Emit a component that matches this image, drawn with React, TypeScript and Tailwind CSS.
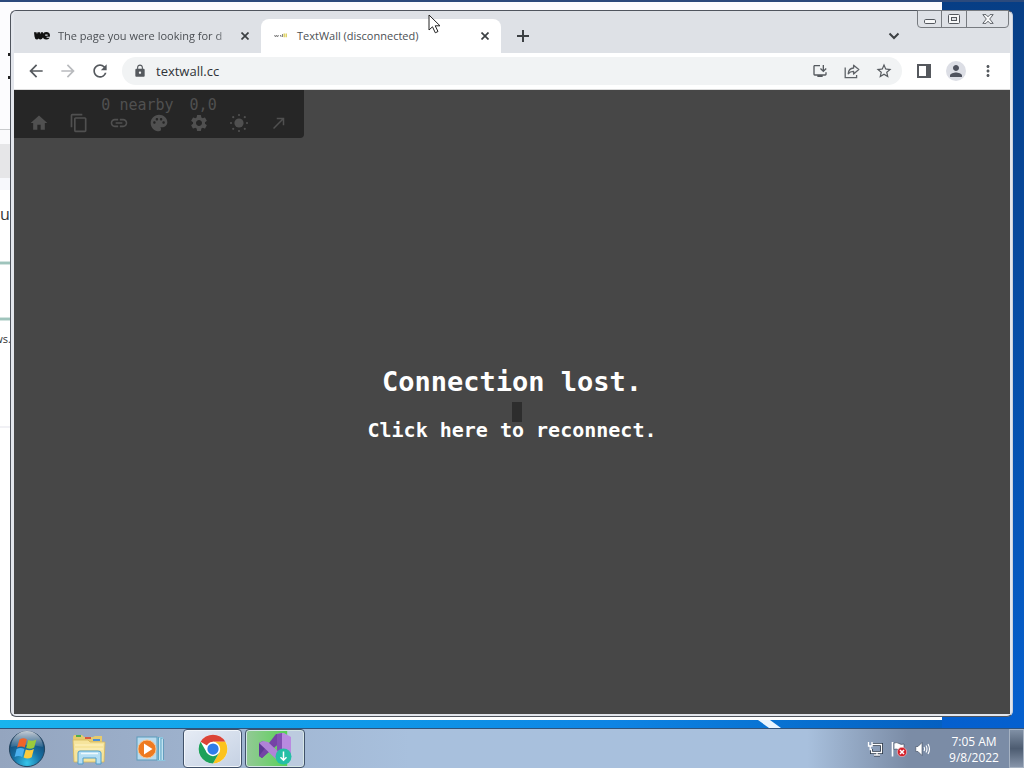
import React from 'react';
import {
  MdArrowBack,
  MdArrowForward,
  MdCallMade,
  MdContentCopy,
  MdHome,
  MdLink,
  MdLock,
  MdMoreVert,
  MdOutlineInstallDesktop,
  MdPalette,
  MdPerson,
  MdRefresh,
  MdSettings,
  MdStarBorder,
} from 'react-icons/md';

interface IconButtonProps {
  label: string;
  children: React.ReactNode;
  className?: string;
}

const IconButton: React.FC<IconButtonProps> = ({ label, children, className = '' }) => (
  <button
    type="button"
    aria-label={label}
    className={`flex shrink-0 items-center justify-center ${className}`}
  >
    {children}
  </button>
);

const CloseIcon = () => (
  <svg className="h-2 w-2" viewBox="0 0 8 8" stroke="#3c4043" strokeWidth="1.7">
    <path d="M0.5 0.5 7.5 7.5M7.5 0.5 0.5 7.5" />
  </svg>
);

const SunIcon = () => (
  <svg className="h-5 w-5" viewBox="0 0 20 20" fill="currentColor">
    <circle cx="10" cy="10" r="4.6" />
    <circle cx="10" cy="2" r="1.1" />
    <circle cx="10" cy="18" r="1.1" />
    <circle cx="2" cy="10" r="1.1" />
    <circle cx="18" cy="10" r="1.1" />
    <circle cx="4.2" cy="4.2" r="1.1" />
    <circle cx="15.8" cy="4.2" r="1.1" />
    <circle cx="4.2" cy="15.8" r="1.1" />
    <circle cx="15.8" cy="15.8" r="1.1" />
  </svg>
);

const ShareIcon = () => (
  <svg className="h-4 w-4" viewBox="0 0 16 16" fill="none" stroke="#5f6368" strokeWidth="1.3">
    <path d="M1.2 4.5V14.6H12.6V12" />
    <path d="M4.2 10.8C4.5 6.8 6.8 5.2 9.6 5V2.2L14.8 6.6 9.6 11V8.3C7.2 8.2 5.6 9 4.2 10.8Z" strokeLinejoin="round" />
  </svg>
);

const SidePanelIcon = () => (
  <svg className="h-3.5 w-3.5" viewBox="0 0 14 14">
    <rect x="1" y="1" width="12" height="12" fill="none" stroke="#55585d" strokeWidth="2" />
    <rect x="9" y="1" width="4" height="12" fill="#55585d" />
  </svg>
);

/* Page behind the browser, only its edges are visible */
const BackgroundWindow = () => (
  <div className="absolute top-0.5 right-[82px] bottom-2 left-0 overflow-hidden bg-white font-['Open_Sans',sans-serif] text-[#333]">
    <div className="flex h-32 flex-col gap-5 border-b border-[#c9cbcd] bg-[#fcfcfe] pt-[51px] pl-2">
      <span className="h-[3px] w-1 bg-[#222]" />
      <span className="h-[3px] w-1 bg-[#222]" />
    </div>
    <div className="h-3.5 bg-[#fafafc]" />
    <div className="h-[34px] bg-[#e6e6e8]" />
    <div className="h-3 bg-[#f7f8fc]" />
    <p className="h-[71px] pt-3 text-base leading-6">u</p>
    <div className="h-1 border-y border-[#d3e4e0] bg-[#9fc4bc]" />
    <div className="h-[52px]" />
    <div className="h-1 border-y border-[#d3e4e0] bg-[#9fc4bc]" />
    <p className="flex h-[105px] w-[11px] justify-end pt-2 text-[11px] leading-5">ws.</p>
    <div className="h-0.5 bg-[#f1f1f5]" />
  </div>
);

const WindowControls = () => (
  <div className="absolute -top-px right-[3px] flex h-[18px] rounded-b border border-[#777b80] text-[#54585e]">
    <IconButton label="Minimize" className="w-6 border-r border-[#777b80]">
      <svg className="mt-1 h-[5px] w-3" viewBox="0 0 12 5">
        <rect x="0.5" y="0.5" width="11" height="4" rx="1.2" fill="#f7f8f9" stroke="currentColor" />
      </svg>
    </IconButton>
    <IconButton label="Maximize" className="w-[25px] border-r border-[#777b80]">
      <svg className="h-2.5 w-3" viewBox="0 0 12 10">
        <rect x="0.5" y="0.5" width="11" height="9" rx="1" fill="#f7f8f9" stroke="currentColor" />
        <rect x="3.5" y="3.5" width="5" height="3" fill="#e0e2e6" stroke="currentColor" />
      </svg>
    </IconButton>
    <IconButton label="Close" className="w-[41px]">
      <svg className="h-2.5 w-3" viewBox="0 0 12 10">
        <path d="M0.8 0.6H4L6 2.8 8 0.6H11.2L7.7 5 11.2 9.4H8L6 7.2 4 9.4H0.8L4.3 5Z" fill="#f7f8f9" stroke="currentColor" strokeWidth="0.9" />
      </svg>
    </IconButton>
  </div>
);

const TabStrip = () => (
  <div className="flex h-[42px] items-end rounded-t bg-[#dee1e6] text-[11px] text-[#4b4f54]">
    <div className="flex h-[34px] w-[247px] items-center pr-2 pl-5">
      <svg className="h-2.5 w-4 shrink-0" viewBox="0 0 16 10">
        <path d="M0 1.2H2.6V2.4H3.4V1.2H6V2.4H6.8V1.2H9V6.4Q8 8.4 6.4 8.4 5.2 8.4 4.7 7.4 4 8.4 2.8 8.4 0.8 8.4 0.5 5.6Z" fill="#111" />
        <circle cx="12.3" cy="4.8" r="3.7" fill="#111" />
        <path d="M11.2 4.1H13.6M12.6 6.3H16" stroke="#dee1e6" strokeWidth="1.1" />
      </svg>
      <span className="ml-2 flex-1 overflow-hidden whitespace-nowrap [mask-image:linear-gradient(to_right,black_90%,transparent)]">
        The page you were looking for d
      </span>
      <IconButton label="Close tab" className="ml-1 h-4 w-4"><CloseIcon /></IconButton>
    </div>
    <div className="flex h-[34px] w-60 items-center rounded-t-lg bg-white px-2">
      <svg className="ml-1 h-4 w-4 shrink-0" viewBox="0 0 16 16">
        <path d="M1.5 7 2.5 9 3.5 7 4.5 9 5.5 7M7 7.5H8V9M9.5 6V9" fill="none" stroke="#777" strokeWidth="0.9" />
        <path d="M11.2 5.5V9.2M13.2 5.5V9.2" stroke="#d9cb4e" strokeWidth="1.3" />
      </svg>
      <span className="ml-2 flex-1 whitespace-nowrap">TextWall (disconnected)</span>
      <IconButton label="Close tab" className="h-4 w-4"><CloseIcon /></IconButton>
    </div>
    <IconButton label="New tab" className="ml-2 h-[34px] w-7">
      <svg className="h-3 w-3" viewBox="0 0 12 12" stroke="#3c4043" strokeWidth="2">
        <path d="M6 0V12M0 6H12" />
      </svg>
    </IconButton>
    <IconButton label="Search tabs" className="mr-[102px] ml-auto h-[34px] w-7">
      <svg className="h-2 w-3" viewBox="0 0 12 8" fill="none" stroke="#3c4043" strokeWidth="2">
        <path d="M1.5 1.5 6 6 10.5 1.5" />
      </svg>
    </IconButton>
  </div>
);

const AddressBar = () => (
  <div className="flex h-[37px] items-center border-b border-[#dcdcdc] bg-white pr-3 pl-3 text-[#55595e]">
    <IconButton label="Back" className="w-5"><MdArrowBack className="h-5 w-5" /></IconButton>
    <IconButton label="Forward" className="ml-3 w-5"><MdArrowForward className="h-5 w-5 text-[#b9bbbe]" /></IconButton>
    <IconButton label="Reload" className="ml-3 w-5"><MdRefresh className="h-5 w-5" /></IconButton>
    <div className="ml-3 flex h-7 flex-1 items-center rounded-full bg-[#f1f3f4] pr-2 pl-[11px]">
      <MdLock className="h-3.5 w-3.5 shrink-0" />
      <input
        aria-label="Address"
        defaultValue="textwall.cc"
        className="ml-[9px] min-w-0 flex-1 bg-transparent pt-0.5 text-[13px] text-[#303338] outline-none"
      />
      <IconButton label="Install app" className="w-5"><MdOutlineInstallDesktop className="h-4 w-4" /></IconButton>
      <IconButton label="Share" className="ml-3 w-5"><ShareIcon /></IconButton>
      <IconButton label="Bookmark" className="ml-3 w-5"><MdStarBorder className="h-[18px] w-[18px]" /></IconButton>
    </div>
    <IconButton label="Side panel" className="ml-3 w-5"><SidePanelIcon /></IconButton>
    <IconButton label="Profile" className="ml-3 h-5 w-5 rounded-full bg-[#dcdee5]">
      <MdPerson className="h-[18px] w-[18px] text-[#4f535e]" />
    </IconButton>
    <IconButton label="Menu" className="ml-3 w-5"><MdMoreVert className="h-[18px] w-[18px]" /></IconButton>
  </div>
);

const wallTools = [
  { label: 'Home', icon: <MdHome className="h-5 w-5" /> },
  { label: 'Copy', icon: <MdContentCopy className="h-5 w-5" /> },
  { label: 'Link', icon: <MdLink className="h-5 w-5" /> },
  { label: 'Colors', icon: <MdPalette className="h-5 w-5" /> },
  { label: 'Settings', icon: <MdSettings className="h-5 w-5" /> },
  { label: 'Theme', icon: <SunIcon /> },
  { label: 'Teleport', icon: <MdCallMade className="h-[18px] w-[18px]" /> },
];

const TextWall = () => (
  <main className="relative flex-1 bg-[#474747] font-['DejaVu_Sans_Mono',monospace]">
    <div className="h-12 w-[290px] rounded-br bg-[#262626] pt-[7px] text-[#505050]">
      <p className="flex justify-center gap-4 text-[15px] leading-4">
        <span>0 nearby</span>
        <span>0,0</span>
      </p>
      <div className="flex px-[5px]">
        {wallTools.map((tool) => (
          <IconButton key={tool.label} label={tool.label} className="h-5 w-10">
            {tool.icon}
          </IconButton>
        ))}
      </div>
    </div>
    {/* Text cursor of the wall, under the overlay */}
    <span className="absolute top-1/2 left-1/2 h-5 w-2.5 bg-[#2d2d2d]" />
    <div className="absolute inset-0 flex flex-col items-center justify-center gap-4 pt-2 font-bold whitespace-nowrap text-white">
      <h1 className="text-[27px] leading-8">Connection lost.</h1>
      <button type="button" className="text-xl leading-8 font-bold">Click here to reconnect.</button>
    </div>
  </main>
);

const StartOrb = () => (
  <svg className="h-[38px] w-[38px]" viewBox="0 0 38 38">
    <defs>
      <radialGradient id="orb" cx="50%" cy="90%" r="85%">
        <stop offset="0" stopColor="#35c5ea" />
        <stop offset="0.45" stopColor="#1772a5" />
        <stop offset="1" stopColor="#123c66" />
      </radialGradient>
      <linearGradient id="shine" x1="0" y1="0" x2="0" y2="1">
        <stop offset="0" stopColor="#fff" stopOpacity="0.75" />
        <stop offset="1" stopColor="#fff" stopOpacity="0.1" />
      </linearGradient>
    </defs>
    <circle cx="19" cy="19" r="17.6" fill="url(#orb)" stroke="#24445f" />
    <path d="M3 17A16 16 0 0 1 35 17Q19 13 3 17Z" fill="url(#shine)" />
    <path d="M11.5 9.5Q15 7 18.8 9.2L16.8 17.4Q13 15.4 9 17.4Z" fill="#f0642a" />
    <path d="M20.2 9.9Q24 11.6 28.4 9.4L26.2 17.6Q22.5 19.8 18.2 18Z" fill="#9ccb3b" />
    <path d="M8.6 18.9Q12.5 17 16.4 18.9L14.2 27Q10.6 25.2 6.6 27Z" fill="#4bb0ee" />
    <path d="M17.8 19.5Q21.6 21.2 25.9 19L23.7 27.3Q19.8 29.6 15.6 27.6Z" fill="#fbcb3c" />
  </svg>
);

const ExplorerIcon = () => (
  <svg className="h-8 w-9" viewBox="0 0 36 32">
    <path d="M2 4 3 2H11L13 4H22L24 3H31V28H3Z" fill="#e6cb6e" />
    <path d="M5 2H10V4H5Z" fill="#4fae50" />
    <path d="M14 4H20V6H14Z" fill="#d9573d" />
    <path d="M22 6H29V8H22Z" fill="#4d8fd6" />
    <path d="M2 7H17L19 9H34L33 29H3Z" fill="#f6e49c" stroke="#d5b65c" strokeWidth="0.8" />
    <path d="M4 12H32M4 16H32" stroke="#fff4c4" />
    <path d="M7 31V20Q7 18 9 18H27Q30 18 30 20V31H25V25H12V31Z" fill="#b4def3" stroke="#4f9dca" />
    <path d="M10 20.5H27" stroke="#eef9fe" strokeWidth="1.5" />
  </svg>
);

const MediaPlayerIcon = () => (
  <svg className="h-7 w-8" viewBox="0 0 32 28">
    <path d="M22 2H28V24L31 26H22Z" fill="#8cc6df" />
    <path d="M23.5 2V25M26 3V25M28.5 4V25" stroke="#4c94b8" strokeWidth="0.7" />
    <path d="M24.7 3V25M27.2 4V25" stroke="#e2f5fb" strokeWidth="0.9" />
    <rect x="2" y="2" width="20" height="23" fill="#b9dbee" stroke="#5b9bbb" />
    <circle cx="12" cy="14" r="9" fill="#ee7a20" stroke="#f9c38e" />
    <path d="M9 8.5V19.5L17.5 14Z" fill="#fff" />
  </svg>
);

const ChromeIcon = () => (
  <svg className="h-[30px] w-[30px]" viewBox="0 0 48 48">
    <circle cx="24" cy="24" r="23" fill="#fff" />
    <path d="M24 24 4.1 12.5A23 23 0 0 1 43.9 12.5H24Z" fill="#db4437" />
    <path d="M24 12.5H43.9A23 23 0 0 1 24 47L34 29.7Z" fill="#fcc31e" />
    <path d="M4.1 12.5A23 23 0 0 0 24 47L34 29.7 14 29.7Z" fill="#1da15a" />
    <circle cx="24" cy="24" r="11.5" fill="#fff" />
    <circle cx="24" cy="24" r="9" fill="#2f7de9" />
  </svg>
);

const InstallerIcon = () => (
  <svg className="h-8 w-9" viewBox="0 0 36 32">
    <path d="M2 10 6 8 10 11V20L5 25 2 23Z" fill="#5d3795" />
    <path d="M5 25 2 23 19 1 25 1V8Z" fill="#7443a6" />
    <path d="M23 0H27L34 4V24L27 29 20 27V1Z" fill="#b98ae0" />
    <path d="M20 1 25 0V28L20 26Z" fill="#8250b4" />
    <path d="M6 8 11 9 28 25 26 29 20 27 2 10Z" fill="#b083d8" />
    <circle cx="26.5" cy="23.5" r="8" fill="#24bfa5" />
    <path d="M26.5 18.5V27M23.5 24.2 26.5 27.2 29.5 24.2" fill="none" stroke="#fff" strokeWidth="1.5" />
  </svg>
);

const TrayIcons = () => (
  <div className="flex items-center gap-2">
    <IconButton label="Network">
      <svg className="h-4 w-4" viewBox="0 0 16 16" fill="none">
        <path d="M5.5 3.5H14.5V11.5H4.5V8M7 14H13M10 12V14" stroke="#263344" strokeWidth="3" />
        <path d="M5.5 3.5H14.5V11.5H4.5V8M7 14H13M10 12V14M1.5 1V5H5V1M3.2 5V8.5H5" stroke="#fff" strokeWidth="1.3" />
      </svg>
    </IconButton>
    <IconButton label="Action center">
      <svg className="h-4 w-4" viewBox="0 0 16 16">
        <path d="M1.5 1V15.5" stroke="#fff" strokeWidth="1.6" />
        <path d="M3 2Q6 1 8 2.5 10 4 13 3V9Q9 10 7 8.5 5 7.5 3 8.5Z" fill="#fff" stroke="#344154" strokeWidth="0.6" />
        <circle cx="11" cy="11" r="4.7" fill="#d4212b" stroke="#f6d3d5" strokeWidth="0.6" />
        <path d="M9 9 13 13M13 9 9 13" stroke="#fff" strokeWidth="1.5" />
      </svg>
    </IconButton>
    <IconButton label="Volume">
      <svg className="h-4 w-4" viewBox="0 0 16 16" fill="none">
        <path d="M0.8 5.5H3L7 1.5V14.5L3 10.5H0.8Z" fill="#fff" stroke="#3a475a" strokeWidth="0.6" />
        <path d="M9 6Q10.2 8 9 10M11 4.5Q13 8 11 11.5M13 3Q16 8 13 13" stroke="#fff" strokeWidth="1.1" />
      </svg>
    </IconButton>
  </div>
);

const Taskbar = () => (
  <footer className="flex h-10 shrink-0 items-stretch border-t border-[#30527a] bg-linear-to-r from-[#94a5bf] via-[#a8c0dd] via-40% to-[#a8c0dd]">
    <div className="flex flex-1 items-stretch bg-linear-to-r from-transparent from-80% to-[#7b8ca6] to-90%">
      <IconButton label="Start" className="w-[54px]"><StartOrb /></IconButton>
      <IconButton label="Explorer" className="ml-1 w-[62px]"><ExplorerIcon /></IconButton>
      <IconButton label="Media Player" className="w-[62px]"><MediaPlayerIcon /></IconButton>
      <IconButton label="Chrome" className="ml-px w-[59px] rounded border border-[#41526a] bg-linear-to-br from-[#e6ecf5] to-[#c5d1e3] shadow-[inset_0_0_0_1px_#f2f6fb]">
        <ChromeIcon />
      </IconButton>
      <IconButton label="Installer" className="ml-[3px] w-[60px] rounded border border-[#41526a] bg-linear-to-r from-[#93c996] via-[#55d055] via-70% to-[#bccbdf] to-72% shadow-[inset_0_0_0_1px_#d5e6e6]">
        <InstallerIcon />
      </IconButton>
      <div className="ml-auto flex items-center pr-2">
        <TrayIcons />
        <div className="ml-4 w-[54px] pt-0.5 text-center text-xs leading-4 whitespace-nowrap text-white">
          <p>7:05 AM</p>
          <p>9/8/2022</p>
        </div>
      </div>
    </div>
    <button
      type="button"
      aria-label="Show desktop"
      className="w-[15px] border border-[#a6b2c2] bg-linear-to-b from-[#8090a5] via-[#4d5c71] to-[#8795aa]"
    />
  </footer>
);

export default function App() {
  return (
    <div className="flex h-screen flex-col overflow-hidden font-['Open_Sans',sans-serif]">
      <div className="relative flex-1 bg-linear-to-r from-[#19b4ee] via-[#0e84e4] via-60% to-[#0457b8]">
        <div className="absolute inset-y-0 right-0 w-[82px] bg-linear-to-b from-[#073e85] to-[#0560cf]" />
        <div className="absolute inset-x-0 top-0 h-0.5 bg-[#2c4a7c]" />
        <BackgroundWindow />
        <svg className="absolute right-[242px] bottom-0 h-2 w-6" viewBox="0 0 24 8">
          <path d="M0 0H12L23 8H11Z" fill="#e9f5ff" />
        </svg>
        <section className="absolute top-2.5 right-[11px] bottom-[11px] left-2.5 flex flex-col rounded-md border border-[#50555e] border-r-[#c9d0dc] bg-[#e3e6ec] pr-0.5 pb-0.5 pl-[3px] text-[#3c4043]">
          <TabStrip />
          <AddressBar />
          <TextWall />
          <WindowControls />
        </section>
        <svg className="absolute top-3.5 left-[428px] h-5 w-3.5" viewBox="0 0 14 20">
          <path d="M1 1V16L4.5 12.8 7.3 18.8 10 17.5 7.2 11.8H12Z" fill="#fff" stroke="#222" />
        </svg>
      </div>
      <Taskbar />
    </div>
  );
}
